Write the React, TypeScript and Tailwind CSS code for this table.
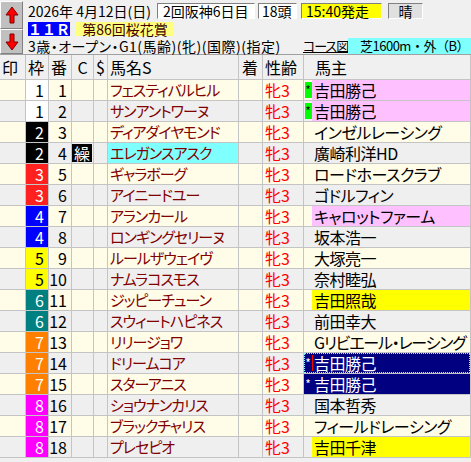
import React from 'react';

type Row = {
  waku: number;
  num: number;
  name: string;
  owner: string;
  c?: string;
  nameBg?: string;
  ownerBg?: 'pink' | 'yellow' | 'navy';
  mark?: boolean;
  focus?: boolean;
};

const rows: Row[] = [
  { waku: 1, num: 1, name: 'フェスティバルヒル', owner: '吉田勝己', ownerBg: 'pink', mark: true },
  { waku: 1, num: 2, name: 'サンアントワーヌ', owner: '吉田勝己', ownerBg: 'pink', mark: true },
  { waku: 2, num: 3, name: 'ディアダイヤモンド', owner: 'インゼルレーシング' },
  { waku: 2, num: 4, name: 'エレガンスアスク', owner: '廣崎利洋HD', c: '繰', nameBg: 'cyan' },
  { waku: 3, num: 5, name: 'ギャラボーグ', owner: 'ロードホースクラブ' },
  { waku: 3, num: 6, name: 'アイニードユー', owner: 'ゴドルフィン' },
  { waku: 4, num: 7, name: 'アランカール', owner: 'キャロットファーム', ownerBg: 'pink' },
  { waku: 4, num: 8, name: 'ロンギングセリーヌ', owner: '坂本浩一' },
  { waku: 5, num: 9, name: 'ルールザウェイヴ', owner: '大塚亮一' },
  { waku: 5, num: 10, name: 'ナムラコスモス', owner: '奈村睦弘' },
  { waku: 6, num: 11, name: 'ジッピーチューン', owner: '吉田照哉', ownerBg: 'yellow' },
  { waku: 6, num: 12, name: 'スウィートハピネス', owner: '前田幸大' },
  { waku: 7, num: 13, name: 'リリージョワ', owner: 'Gリビエール・レーシング' },
  { waku: 7, num: 14, name: 'ドリームコア', owner: '吉田勝己', ownerBg: 'navy', mark: true, focus: true },
  { waku: 7, num: 15, name: 'スターアニス', owner: '吉田勝己', ownerBg: 'navy', mark: true },
  { waku: 8, num: 16, name: 'ショウナンカリス', owner: '国本哲秀' },
  { waku: 8, num: 17, name: 'ブラックチャリス', owner: 'フィールドレーシング' },
  { waku: 8, num: 18, name: 'プレセピオ', owner: '吉田千津', ownerBg: 'yellow' },
];

const wakuColors: Record<number, string> = {
  1: 'bg-white text-black',
  2: 'bg-black text-white',
  3: 'bg-[#ff2020] text-white',
  4: 'bg-[#0000ff] text-white',
  5: 'bg-[#ffff00] text-black',
  6: 'bg-[#008080] text-white',
  7: 'bg-[#ff8000] text-white',
  8: 'bg-[#ff00ff] text-white',
};

const ownerColors = {
  pink: 'bg-[#ffc0ff] text-black',
  yellow: 'bg-[#ffff00] text-black',
  navy: 'bg-[#000080] text-white',
};

const cell = 'h-full border-r border-[#c4c4c4] flex items-center shrink-0';

const ArrowButton = ({ up }: { up?: boolean }) => (
  <div
    className={`w-[23px] ${up ? 'h-[28px]' : 'h-[25px]'} bg-[#c0c0c0] border border-t-white border-l-white border-r-[#808080] border-b-[#808080] flex items-center justify-center`}
  >
    <svg width="14" height="18" viewBox="0 0 14 18" className={up ? '' : 'rotate-180'}>
      <path
        d="M7 1 L13 9 L9 9 L9 17 L5 17 L5 9 L1 9 Z"
        fill="#ff0000"
        stroke="#800000"
        strokeWidth="1"
      />
    </svg>
  </div>
);

const Sunken = ({ className, children }: { className: string; children: React.ReactNode }) => (
  <div
    className={`h-[16px] shrink-0 whitespace-nowrap border border-t-[#808080] border-l-[#808080] border-r-white border-b-white flex items-center leading-[14px] ${className}`}
  >
    {children}
  </div>
);

const App = () => {
  return (
    <div className="w-[471px] h-[462px] bg-[#f0f0f0] overflow-hidden font-['Noto_Sans_CJK_JP',sans-serif] text-black [font-feature-settings:'palt']">
      {/* info panel */}
      <div className="h-[55px] flex border-b border-[#a0a0a0]">
        <div className="flex flex-col pt-[1px] shrink-0">
          <ArrowButton up />
          <ArrowButton />
        </div>
        <div className="flex-1 pl-[5px] flex flex-col text-[14px] whitespace-nowrap">
          <div className="mt-[3px] h-[16px] flex items-center">
            <span className="w-[129px] shrink-0 leading-[14px]">2026年&nbsp;4月12日(日)</span>
            <Sunken className="w-[98px] bg-white pl-[5px]">2回阪神6日目</Sunken>
            <Sunken className="w-[39px] bg-white pl-[3px] ml-[3px]">18頭</Sunken>
            <Sunken className="w-[81px] bg-[#ffff00] pl-[4px] ml-[4px]">15:40発走</Sunken>
            <Sunken className="w-[35px] bg-[#e0e0e0] justify-center ml-[6px]">晴</Sunken>
          </div>
          <div className="mt-[3px] h-[14px] flex items-center">
            <span className="w-[42px] h-full bg-[#0000ff] text-white font-bold flex items-center justify-center leading-[14px] [font-feature-settings:normal]">
              １１Ｒ
            </span>
            <span className="ml-[6px] w-[98px] h-full bg-[#ffff80] text-[#400000] flex items-center justify-center leading-[14px]">
              第86回桜花賞
            </span>
          </div>
          <div className="mt-[2px] h-[16px] flex items-center">
            <span className="w-[275px] shrink-0 leading-[14px] tracking-[0.5px]">3歳・オープン・G1(馬齢)(牝)(国際)(指定)</span>
            <span className="w-[45px] shrink-0 underline leading-[14px] text-[13px] tracking-[-1px]">コース図</span>
            <span className="flex-1 h-full bg-[#80ffff] flex items-center pl-[12px] leading-[14px] text-[13px] tracking-[-0.5px] [font-feature-settings:normal]">
              芝1600m・外（B）
            </span>
          </div>
        </div>
      </div>

      {/* grid */}
      <div className="text-[16px] leading-[20px]">
        <div className="h-[25px] flex border-b border-[#c4c4c4] bg-[#f0f0f0]">
          <div className={`${cell} w-[26px] pl-[2px]`}>印</div>
          <div className={`${cell} w-[23px] pl-[2px]`}>枠</div>
          <div className={`${cell} w-[23px] pl-[2px]`}>番</div>
          <div className={`${cell} w-[22px] justify-center`}>C</div>
          <div className={`${cell} w-[14px] justify-center`}>$</div>
          <div className={`${cell} w-[131px] pl-[2px]`}>馬名S</div>
          <div className={`${cell} w-[24px] pl-[3px]`}>着</div>
          <div className={`${cell} w-[41px] pl-[2px]`}>性齢</div>
          <div className={`${cell} w-[167px] pl-[11px]`}>馬主</div>
        </div>
        {rows.map((r, i) => (
          <div
            key={r.num}
            className={`h-[21px] flex border-b border-[#c4c4c4] ${i % 2 === 0 ? 'bg-[#fffce8]' : 'bg-[#efefef]'}`}
          >
            <div className={`${cell} w-[26px]`} />
            <div className={`${cell} w-[23px]`}>
              <div className={`w-full h-full flex items-center justify-end pr-[4px] ${wakuColors[r.waku]}`}>
                {r.waku}
              </div>
            </div>
            <div className={`${cell} w-[23px] justify-end pr-[4px]`}>{r.num}</div>
            <div className={`${cell} w-[22px]`}>
              {r.c && (
                <span className="w-[20px] h-[18px] bg-black text-white flex items-center justify-center leading-[18px]">
                  {r.c}
                </span>
              )}
            </div>
            <div className={`${cell} w-[14px]`} />
            <div className={`${cell} w-[131px] ${r.nameBg === 'cyan' ? 'bg-[#80ffff]' : ''}`}>
              <span className="pl-[2px] text-[15px] tracking-[-1px] text-[#800000] whitespace-nowrap">{r.name}</span>
            </div>
            <div className={`${cell} w-[24px]`} />
            <div className={`${cell} w-[41px] pl-[2px] text-[#ff0000]`}>牝3</div>
            <div
              className={`${cell} w-[167px] relative ${r.ownerBg === 'navy' ? ownerColors.navy : ''}`}
            >
              <div className="w-[8px] h-full flex items-center justify-center shrink-0">
                {r.mark && (
                  <span
                    className={`w-[7px] h-[16px] flex items-center justify-center text-[12px] leading-[16px] ${
                      r.ownerBg === 'navy' ? 'text-white' : 'bg-[#00ff00] text-black'
                    }`}
                  >
                    *
                  </span>
                )}
              </div>
              <div
                className={`flex-1 h-full flex items-center pl-[2px] whitespace-nowrap ${
                  r.owner.length > 10 ? 'tracking-[-1.2px]' : 'tracking-[-0.5px]'
                } ${r.ownerBg && r.ownerBg !== 'navy' ? ownerColors[r.ownerBg] : ''}`}
              >
                {r.owner}
              </div>
              {r.focus && (
                <>
                  <div className="absolute inset-0 border border-dotted border-[#80ffff]" />
                  <div className="absolute left-[8px] top-[2px] w-[1px] h-[16px] bg-[#ff0000]" />
                </>
              )}
            </div>
          </div>
        ))}
      </div>
    </div>
  );
};

export default App;
